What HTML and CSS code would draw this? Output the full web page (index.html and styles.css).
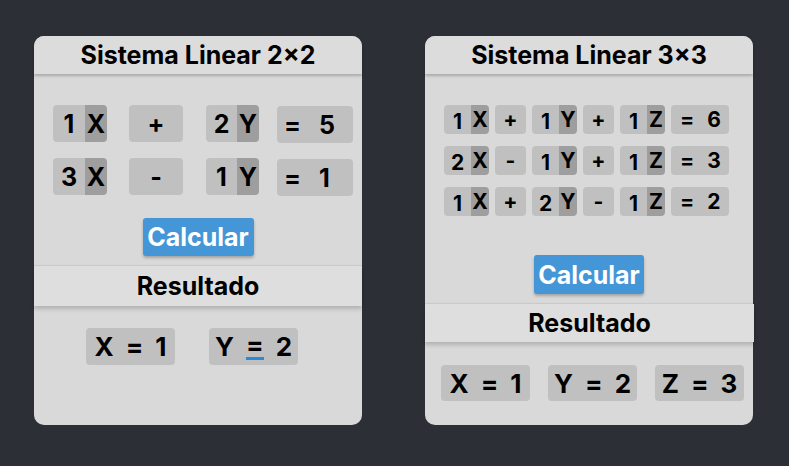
FILE: index.html
```html
<!DOCTYPE html>
<html lang="pt">
<head>
<meta charset="utf-8">
<title>Sistemas Lineares</title>
<link rel="stylesheet" href="styles.css">
</head>
<body>
<div class="page">
  <section class="card card2x2">
    <header class="card-head">Sistema Linear 2×2</header>
    <div class="rows rows2">
      <div class="row row2">
        <div class="term"><span class="num">1</span><span class="var">X</span></div>
        <div class="op">+</div>
        <div class="term"><span class="num">2</span><span class="var">Y</span></div>
        <div class="eq"><span>=</span><span>5</span></div>
      </div>
      <div class="row row2 row2b">
        <div class="term"><span class="num">3</span><span class="var">X</span></div>
        <div class="op">-</div>
        <div class="term"><span class="num">1</span><span class="var">Y</span></div>
        <div class="eq"><span>=</span><span>1</span></div>
      </div>
    </div>
    <div class="btn-wrap"><button class="btn">Calcular</button></div>
    <div class="result-head">Resultado</div>
    <div class="results results2">
      <div class="res"><span>X</span><span>=</span><span>1</span></div>
      <div class="res"><span>Y</span><span class="cursor">=</span><span>2</span></div>
    </div>
  </section>

  <section class="card card3x3">
    <header class="card-head">Sistema Linear 3×3</header>
    <div class="rows rows3">
      <div class="row row3">
        <div class="term"><span class="num">1</span><span class="var">X</span></div>
        <div class="op">+</div>
        <div class="term"><span class="num">1</span><span class="var">Y</span></div>
        <div class="op">+</div>
        <div class="term"><span class="num">1</span><span class="var">Z</span></div>
        <div class="eq"><span>=</span><span>6</span></div>
      </div>
      <div class="row row3">
        <div class="term"><span class="num">2</span><span class="var">X</span></div>
        <div class="op">-</div>
        <div class="term"><span class="num">1</span><span class="var">Y</span></div>
        <div class="op">+</div>
        <div class="term"><span class="num">1</span><span class="var">Z</span></div>
        <div class="eq"><span>=</span><span>3</span></div>
      </div>
      <div class="row row3">
        <div class="term"><span class="num">1</span><span class="var">X</span></div>
        <div class="op">+</div>
        <div class="term"><span class="num">2</span><span class="var">Y</span></div>
        <div class="op">-</div>
        <div class="term"><span class="num">1</span><span class="var">Z</span></div>
        <div class="eq"><span>=</span><span>2</span></div>
      </div>
    </div>
    <div class="btn-wrap btn-wrap3"><button class="btn btn3">Calcular</button></div>
    <div class="result-head result-head3">Resultado</div>
    <div class="results results3">
      <div class="res"><span>X</span><span>=</span><span>1</span></div>
      <div class="res"><span>Y</span><span>=</span><span>2</span></div>
      <div class="res"><span>Z</span><span>=</span><span>3</span></div>
    </div>
  </section>
</div>
</body>
</html>
```

FILE: styles.css
```css
* { box-sizing: border-box; }
html, body { margin: 0; padding: 0; }
body {
  background: #2c2f36;
  font-family: Inter, "Noto Sans", sans-serif;
  font-weight: 700;
  color: #000;
  width: 789px;
  height: 466px;
  overflow: hidden;
}
.page {
  display: flex;
  gap: 63px;
  padding: 36px 0 0 34px;
}
.card {
  width: 328px;
  height: 389px;
  background: #d9d9d9;
  border-radius: 10px;
  display: flex;
  flex-direction: column;
}
.card-head {
  height: 38px;
  background: #dcdcdc;
  border-radius: 10px 10px 0 0;
  box-shadow: 0 2px 3px rgba(0,0,0,0.22);
  display: flex;
  align-items: center;
  justify-content: center;
  font-size: 25px;
  position: relative;
  z-index: 1;
}
.rows { display: flex; flex-direction: column; }
.rows2 { padding: 31px 0 0 19px; gap: 16px; }
.row { display: flex; align-items: flex-start; }
.row2 { height: 37px; font-size: 25px; }
.row2 .term { width: 54px; margin-right: 22px; }
.row2 .op { width: 54px; margin-right: 23px; }
.row2 .term + .op + .term { margin-right: 18px; width: 53px; }
.row2 .eq { width: 76px; height: 37px; margin-top: 1px; padding-left: 7px; gap: 18px; }

.term {
  display: flex;
  height: 100%;
  border-radius: 4px;
  overflow: hidden;
}
.num {
  flex: 1;
  background: #c0c0c0;
  display: flex;
  align-items: center;
  justify-content: center;
}
.var {
  background: #9e9e9e;
  display: flex;
  align-items: center;
  justify-content: center;
}
.row2 .var { width: 22px; }
.op, .eq {
  height: 100%;
  background: #c0c0c0;
  border-radius: 4px;
  display: flex;
  align-items: center;
}
.op { justify-content: center; }

.rows3 { padding: 31px 0 0 19px; gap: 12px; }
.row3 { height: 29px; font-size: 21px; gap: 6px; }
.row3 .term { width: 45px; }
.row3 .var { width: 18px; }
.row3 .num { padding-top: 3px; }
.row3 .op { width: 31px; }
.row3 .eq { width: 58px; padding-left: 9px; gap: 13px; }

.btn-wrap { display: flex; justify-content: center; padding-top: 23px; }
.btn {
  width: 111px;
  height: 38px;
  border: 0;
  border-radius: 3px;
  background: #4496d6;
  color: #fff;
  font-family: inherit;
  font-weight: 700;
  font-size: 25px;
  padding: 0;
  box-shadow: 0 2px 3px rgba(0,0,0,0.25);
}
.btn-wrap3 { padding-top: 39px; }
.btn3 { width: 110px; height: 39px; }

.result-head {
  margin-top: 10px;
  height: 40px;
  background: #dedede;
  box-shadow: 0 -1px 1px rgba(0,0,0,0.06), 0 3px 4px rgba(0,0,0,0.18);
  display: flex;
  align-items: center;
  justify-content: center;
  font-size: 25px;
}
.result-head3 { height: 38px; margin-right: -1px; }

.results { display: flex; }
.results2 { padding: 22px 0 0 52px; gap: 34px; }
.results3 { padding: 23px 0 0 16px; gap: 18px; }
.res {
  width: 89px;
  height: 37px;
  background: #c0c0c0;
  border-radius: 4px;
  display: flex;
  align-items: center;
  justify-content: center;
  gap: 12px;
  font-size: 26px;
}
.results3 .res { height: 36px; }
.cursor {
  border-bottom: 3px solid #2a8ad8;
  line-height: 24px;
}
```
